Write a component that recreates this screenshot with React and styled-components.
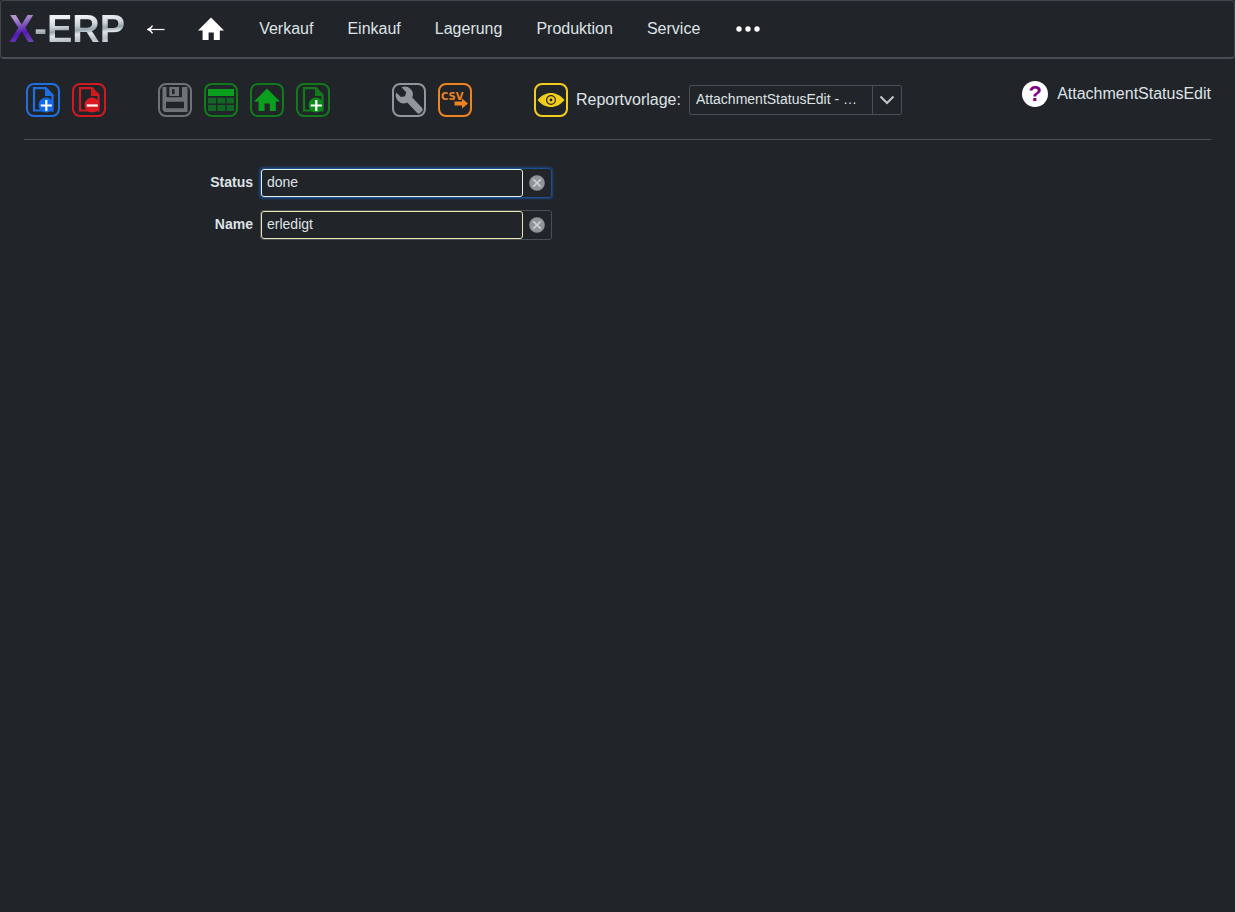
import React, { useState } from 'react';
import styled, { createGlobalStyle } from 'styled-components';

const modules = ['Verkauf', 'Einkauf', 'Lagerung', 'Produktion', 'Service'];

const HomeShape = ({ size }) => (
  <svg width={size} height={size} viewBox='0 0 26 26' fill='currentColor'>
    <path d='M13 1.5 26 14.5h-4.2V24h-6v-7.5h-5.2V24h-6v-9.5H0z' />
  </svg>
);

const FileShape = ({ sign, badge }) => (
  <svg width='30' height='30' viewBox='0 0 30 30'>
    <path
      d='M6 3.2h11.5l7 7.3V25.500H6z'
      fill='none'
      stroke='currentColor'
      strokeWidth='2.2'
    />
    <path d='M17 2.2h1.500l7 7.500V11H17z' fill='currentColor' />
    <circle cx='18' cy='20' r='7.5' fill={badge} />
    <path
      d={sign === 'plus' ? 'M12.8 20.5h11M18.3 15v11' : 'M12.8 20.5h11'}
      stroke='#fff'
      strokeWidth='2.2'
    />
  </svg>
);

const SaveShape = () => (
  <svg width='30' height='30' viewBox='0 0 30 30'>
    <path
      d='M2.500 2H27.500v25H4.500l-2-2zM6.500 2v10.300H22V2zM6 16.700v6.600h18v-6.600z'
      fill='currentColor'
      fillRule='evenodd'
    />
    <path
      d='M9.300 2H19v9H9.300zM12 4.300V9h2.600V4.300z'
      fill='currentColor'
      fillRule='evenodd'
    />
  </svg>
);

const TableShape = () => (
  <svg width='30' height='30' viewBox='0 0 30 30'>
    <path d='M2 4h26v7H2z' fill='#0aa01e' />
    <path
      d='M2 12.700h8v5.800H2zM11.300 12.700h8v5.800h-8zM20.500 12.700H28v5.800h-7.500zM2 20h8v6H2zM11.300 20h8v6h-8zM20.500 20H28v6h-7.500z'
      fill='#126725'
    />
  </svg>
);

const WrenchShape = () => (
  <svg width='30' height='30' viewBox='0 0 30 30'>
    <path
      d='M7.500 2.300a8 8 0 0 1 10.800 10.200l9.900 10.600a2.200 2.200 0 0 1 0 3l-2 2a2.200 2.200 0 0 1-3 0L13.200 17.600A8 8 0 0 1 2.300 7.500l4.700 4.500 4-.800 1.200-4z'
      fill='currentColor'
    />
  </svg>
);

const CsvShape = () => (
  <svg width='30' height='30' viewBox='0 0 30 30'>
    <text
      x='1'
      y='15'
      fontFamily='DejaVu Sans, Verdana, sans-serif'
      fontSize='10'
      fontWeight='700'
      fill='currentColor'
    >
      CSV
    </text>
    <path d='M14.500 16.500h7.500v-3l6 5-6 5v-3h-7.500z' fill='currentColor' />
  </svg>
);

const EyeShape = () => (
  <svg width='30' height='30' viewBox='0 0 30 30'>
    <path
      d='M1.500 15C6 10 10 8 15 8s9 2 13.500 7c-4.500 5-8.500 7-13.500 7s-9-2-13.500-7z M15 10a5 5 0 1 0 0 10 5 5 0 0 0 0-10z'
      fill='currentColor'
      fillRule='evenodd'
    />
    <circle cx='15' cy='15' r='2.600' fill='none' stroke='currentColor' strokeWidth='2.400' />
  </svg>
);

const ClearShape = () => (
  <svg width='16' height='16' viewBox='0 0 17 17'>
    <circle cx='8.500' cy='8.500' r='8.300' fill='#91959a' />
    <path d='m4.500 4.500 8 8m0-8-8 8' stroke='#d0d3d6' strokeWidth='1.800' />
  </svg>
);

const toolGroups = [
  [
    { label: 'Neu', color: '#1f6fe0', icon: <FileShape sign='plus' badge='#1268ee' /> },
    { label: 'Löschen', color: '#d01a20', icon: <FileShape sign='minus' badge='#d91c22' /> },
  ],
  [
    { label: 'Speichern', color: '#6f7276', icon: <SaveShape /> },
    { label: 'Liste', color: '#127a1c', icon: <TableShape /> },
    { label: 'Start', color: '#127a1c', glyph: '#0aa01e', icon: <HomeShape size={26} /> },
    { label: 'Speichern und neu', color: '#127a1c', icon: <FileShape sign='plus' badge='#0b8a1a' /> },
  ],
  [
    { label: 'Einstellungen', color: '#92969c', icon: <WrenchShape /> },
    { label: 'CSV-Export', color: '#ee8322', icon: <CsvShape /> },
  ],
];

const Field = ({ id, label, value, onChange, active }) => (
  <Row>
    <FieldLabel htmlFor={id}>{label}</FieldLabel>
    <InputGroup $active={active}>
      <TextInput
        id={id}
        type='text'
        value={value}
        $active={active}
        onChange={(e) => onChange(e.target.value)}
      />
      <ClearButton
        type='button'
        aria-label={`${label} leeren`}
        onClick={() => onChange('')}
      >
        <ClearShape />
      </ClearButton>
    </InputGroup>
  </Row>
);

const App = () => {
  const [status, setStatus] = useState('done');
  const [name, setName] = useState('erledigt');

  return (
    <>
      <GlobalStyle />
      <Header>
        <Logo href='#'>
          <LogoMark>X</LogoMark>
          <LogoName>-ERP</LogoName>
        </Logo>
        <BackButton type='button' aria-label='Zurück'>
          <svg width='18' height='10' viewBox='0 0 18 10' fill='none' stroke='currentColor'>
            <path d='M17.500 5.500H2' strokeWidth='1.200' />
            <path d='M5.500 1.700Q4 4.500 1 5.500q3 1 4.500 3.800' strokeWidth='1.400' />
          </svg>
        </BackButton>
        <HomeLink href='#' aria-label='Startseite'>
          <HomeShape size={26} />
        </HomeLink>
        <Nav>
          {modules.map((item) => (
            <NavLink href='#' key={item}>
              {item}
            </NavLink>
          ))}
        </Nav>
        <MoreButton type='button' aria-label='Mehr'>
          <svg width='24' height='6' viewBox='0 0 24 6' fill='currentColor'>
            <circle cx='3' cy='3' r='2.700' />
            <circle cx='12' cy='3' r='2.700' />
            <circle cx='21' cy='3' r='2.700' />
          </svg>
        </MoreButton>
      </Header>
      <Main>
        <Toolbar>
          <Tools>
            {toolGroups.map((group) => (
              <ToolGroup key={group[0].label}>
                {group.map((tool) => (
                  <ToolButton
                    type='button'
                    key={tool.label}
                    aria-label={tool.label}
                    $color={tool.color}
                    $glyph={tool.glyph}
                  >
                    {tool.icon}
                  </ToolButton>
                ))}
              </ToolGroup>
            ))}
            <Report>
              <ToolButton type='button' aria-label='Vorschau' $color='#f3cd1c'>
                <EyeShape />
              </ToolButton>
              <label htmlFor='report'>Reportvorlage:</label>
              <SelectBox>
                <Select id='report'>
                  <option>AttachmentStatusEdit - …</option>
                </Select>
                <SelectArrow>
                  <svg width='16' height='10' viewBox='0 0 16 10' fill='none'>
                    <path d='m1.500 1.500 6.500 6.500 6.500-6.500' stroke='#c3c7cb' strokeWidth='2' />
                  </svg>
                </SelectArrow>
              </SelectBox>
            </Report>
          </Tools>
          <PageInfo>
            <HelpButton type='button'>?</HelpButton>
            <span>AttachmentStatusEdit</span>
          </PageInfo>
        </Toolbar>
        <Form>
          <Field id='status' label='Status' value={status} onChange={setStatus} active />
          <Field id='name' label='Name' value={name} onChange={setName} />
        </Form>
      </Main>
    </>
  );
};

const GlobalStyle = createGlobalStyle`
  * {
    box-sizing: border-box;
  }
  body {
    margin: 0;
    background-color: #212529;
    color: #dee2e6;
    font-family: 'Liberation Sans', Arial, sans-serif;
    font-size: 16px;
    line-height: 24px;
  }
  button,
  input,
  select {
    font-family: inherit;
    color: inherit;
  }
  button {
    padding: 0;
    border: none;
    background: none;
    cursor: pointer;
  }
  svg {
    display: block;
    flex-shrink: 0;
  }
`;

const Header = styled.header`
  display: flex;
  align-items: center;
  height: 59px;
  padding: 0 8px;
  border: 1px solid #42464c;
  border-bottom: 2px solid #494d54;
  border-radius: 4px;
`;

const Logo = styled.a`
  display: flex;
  font-size: 38px;
  font-weight: 700;
  line-height: 44px;
  text-decoration: none;
`;

const LogoMark = styled.span`
  color: transparent;
  background: linear-gradient(165deg, #b294ca 25%, #7f55bd 42%, #5518b4 58%, #6f45ac 80%);
  background-clip: text;
`;

const LogoName = styled.span`
  color: transparent;
  background: linear-gradient(
    175deg,
    #eef2f5 25%,
    #ccd4da 42%,
    #98a4ae 52%,
    #dfe5e9 60%,
    #b4bec6 72%,
    #e6eaee 85%
  );
  background-clip: text;
`;

const BackButton = styled.button`
  margin-left: 22px;
  color: #fff;
`;

const HomeLink = styled.a`
  margin-left: 33px;
  color: #fff;
`;

const Nav = styled.nav`
  display: flex;
  gap: 34px;
  margin-left: 35px;
`;

const NavLink = styled.a`
  color: inherit;
  text-decoration: none;
  :hover {
    color: #fff;
  }
`;

const MoreButton = styled.button`
  margin-left: 36px;
  color: #fff;
`;

const Main = styled.main`
  padding: 0 24px;
`;

const Toolbar = styled.div`
  display: flex;
  justify-content: space-between;
  height: 81px;
  padding: 24px 0 0 2px;
  border-bottom: 1px solid #4d5156;
`;

const Tools = styled.div`
  display: flex;
  align-items: flex-start;
`;

const ToolGroup = styled.div`
  display: flex;
  gap: 12px;
  margin-right: 52px;
  & + & {
    margin-right: 62px;
  }
`;

const ToolButton = styled.button`
  display: flex;
  align-items: center;
  justify-content: center;
  width: 34px;
  height: 34px;
  border: 2px solid ${(p) => p.$color};
  border-radius: 8px;
  color: ${(p) => p.$glyph || p.$color};
`;

const Report = styled.div`
  display: flex;
  align-items: center;
  gap: 8px;
`;

const SelectBox = styled.div`
  display: grid;
  grid-template-columns: 1fr 29px;
  width: 213px;
  height: 30px;
  border: 1px solid #495057;
  border-radius: 2px;
`;

const Select = styled.select`
  grid-area: 1 / 1 / 2 / 3;
  width: 100%;
  padding: 0 30px 2px 6px;
  appearance: none;
  border: none;
  outline: none;
  background: none;
  font-size: 14px;
`;

const SelectArrow = styled.span`
  grid-area: 1 / 2;
  display: flex;
  align-items: center;
  justify-content: center;
  border-left: 1px solid #495057;
  pointer-events: none;
`;

const PageInfo = styled.div`
  display: flex;
  align-items: center;
  gap: 9px;
  height: 22px;
`;

const HelpButton = styled.button`
  width: 26px;
  height: 26px;
  border-radius: 50%;
  background-color: #fff;
  color: #800080;
  font-size: 22px;
  font-weight: 700;
  line-height: 26px;
`;

const Form = styled.form`
  display: flex;
  flex-direction: column;
  gap: 12px;
  padding-top: 28px;
`;

const Row = styled.div`
  display: flex;
  gap: 7px;
  font-size: 14px;
`;

const FieldLabel = styled.label`
  width: 229px;
  font-weight: 700;
  line-height: 28px;
  text-align: right;
`;

const InputGroup = styled.div`
  display: flex;
  width: 292px;
  height: 30px;
  border: 1px solid ${(p) => (p.$active ? '#1f4f91' : '#495057')};
  border-radius: 3px;
  box-shadow: ${(p) => (p.$active ? '0 0 2px 1px #1d427a' : 'none')};
`;

const TextInput = styled.input`
  flex: 1;
  min-width: 0;
  padding: 0 5px 2px;
  border: 1px solid ${(p) => (p.$active ? '#e3efe0' : '#ece4ae')};
  border-radius: 3px;
  outline: none;
  background-color: #212529;
  font-size: 14px;
`;

const ClearButton = styled.button`
  display: flex;
  align-items: center;
  justify-content: center;
  width: 28px;
`;

export default App;
